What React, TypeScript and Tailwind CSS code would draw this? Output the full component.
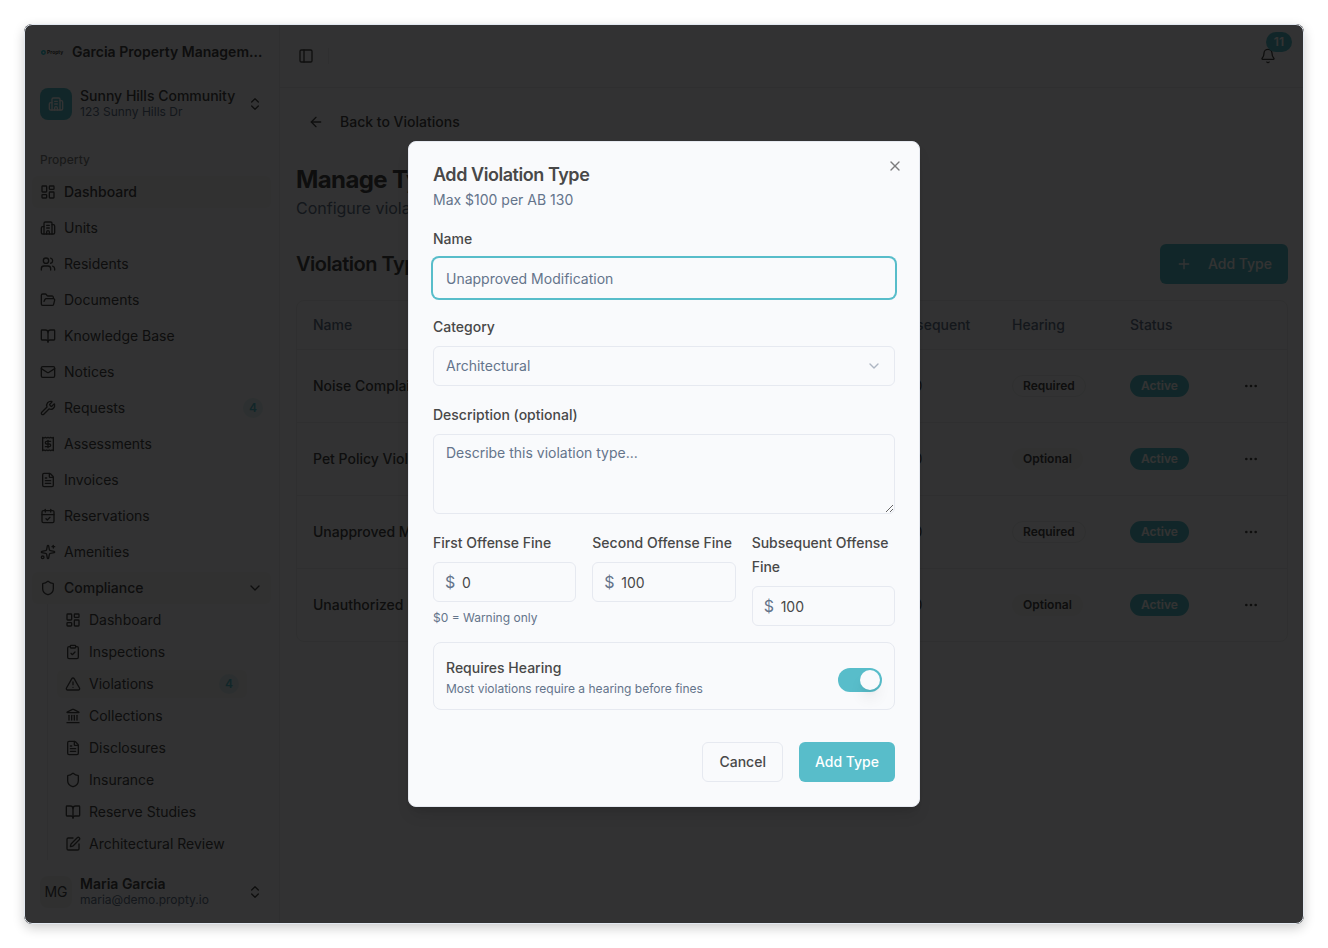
import {
  ArrowLeft,
  Bell,
  BookOpen,
  Building2,
  CalendarCheck,
  ChevronDown,
  ChevronsUpDown,
  ClipboardCheck,
  Ellipsis,
  FileText,
  FolderOpen,
  Landmark,
  LayoutDashboard,
  type LucideIcon,
  Mail,
  PanelLeft,
  Plus,
  Receipt,
  Shield,
  Sparkles,
  SquarePen,
  TriangleAlert,
  Users,
  Wrench,
  X,
} from "lucide-react";

type NavEntry = {
  label: string;
  icon: LucideIcon;
  badge?: number;
  active?: boolean;
};

const NAV: NavEntry[] = [
  { label: "Dashboard", icon: LayoutDashboard, active: true },
  { label: "Units", icon: Building2 },
  { label: "Residents", icon: Users },
  { label: "Documents", icon: FolderOpen },
  { label: "Knowledge Base", icon: BookOpen },
  { label: "Notices", icon: Mail },
  { label: "Requests", icon: Wrench, badge: 4 },
  { label: "Assessments", icon: Receipt },
  { label: "Invoices", icon: FileText },
  { label: "Reservations", icon: CalendarCheck },
  { label: "Amenities", icon: Sparkles },
];

const COMPLIANCE: NavEntry[] = [
  { label: "Dashboard", icon: LayoutDashboard },
  { label: "Inspections", icon: ClipboardCheck },
  { label: "Violations", icon: TriangleAlert, badge: 4, active: true },
  { label: "Collections", icon: Landmark },
  { label: "Disclosures", icon: FileText },
  { label: "Insurance", icon: Shield },
  { label: "Reserve Studies", icon: BookOpen },
  { label: "Architectural Review", icon: SquarePen },
];

const TYPES = [
  { name: "Noise Complaint", category: "Noise", hearing: true },
  { name: "Pet Policy Violation", category: "Pet", hearing: false },
  { name: "Unapproved Modification", category: "Architectural", hearing: true },
  { name: "Unauthorized Parking", category: "Parking", hearing: false },
];

function CountBadge({ count }: { count: number }) {
  return (
    <span className="ml-auto flex h-5 min-w-5 items-center justify-center rounded-full bg-[#58bdca]/15 px-1 font-semibold text-[#58bdca] text-xs">
      {count}
    </span>
  );
}

function Sidebar() {
  return (
    <aside className="flex w-64 shrink-0 flex-col border-[#e9ebef] border-r bg-[#f9fafc]">
      <div className="flex flex-col gap-2 p-2">
        <div className="flex h-10 items-center gap-2 px-2">
          <span className="flex w-6 shrink-0 items-center gap-px pl-px font-bold text-[5px] leading-none">
            <svg viewBox="0 0 10 10" className="size-[5px] shrink-0">
              <circle
                cx="5"
                cy="5"
                r="3.4"
                fill="none"
                stroke="#2fc4d4"
                strokeWidth="3"
              />
            </svg>
            Propty
          </span>
          <span className="truncate font-semibold text-sm">
            Garcia Property Management
          </span>
        </div>
        <button
          type="button"
          className="flex h-12 items-center gap-2 rounded-md p-2 text-left"
        >
          <span className="flex size-8 items-center justify-center rounded-lg bg-[#58bdca] text-white">
            <Building2 className="size-4" />
          </span>
          <span className="grid flex-1">
            <span className="truncate font-medium text-sm leading-4">
              Sunny Hills Community
            </span>
            <span className="truncate text-[#64748b] text-xs leading-4">
              123 Sunny Hills Dr
            </span>
          </span>
          <ChevronsUpDown className="size-4" />
        </button>
      </div>

      <nav className="min-h-0 flex-1 overflow-hidden px-2 pt-2">
        <p className="flex h-8 items-center px-2 font-medium text-[#484848]/70 text-xs">
          Property
        </p>
        <ul className="flex flex-col gap-1">
          {NAV.map(({ label, icon: Icon, badge, active }) => (
            <li key={label}>
              <a
                href="#"
                className={`flex h-8 items-center gap-2 rounded-md px-2 text-sm ${active ? "bg-[#f4f4f5] font-medium" : ""}`}
              >
                <Icon className="size-4" />
                {label}
                {badge && <CountBadge count={badge} />}
              </a>
            </li>
          ))}
          <li>
            <button
              type="button"
              className="flex h-8 w-full items-center gap-2 rounded-md bg-[#f4f4f5] px-2 font-medium text-sm"
            >
              <Shield className="size-4" />
              Compliance
              <ChevronDown className="ml-auto size-4" />
            </button>
            <ul className="mr-3.5 ml-[15px] flex flex-col gap-1 border-[#e9ebef] border-l py-0.5 pr-2.5 pl-[9px]">
              {COMPLIANCE.map(({ label, icon: Icon, badge, active }) => (
                <li key={label}>
                  <a
                    href="#"
                    className={`flex h-7 items-center gap-2 rounded-md px-2 text-sm ${active ? "bg-[#f4f4f5]" : ""}`}
                  >
                    <Icon className="size-4" />
                    {label}
                    {badge && <CountBadge count={badge} />}
                  </a>
                </li>
              ))}
            </ul>
          </li>
        </ul>
      </nav>

      <div className="p-2">
        <button
          type="button"
          className="flex h-12 w-full items-center gap-2 rounded-md p-2 text-left"
        >
          <span className="flex size-8 items-center justify-center rounded-lg bg-[#eeeff1] text-sm">
            MG
          </span>
          <span className="grid flex-1">
            <span className="truncate font-semibold text-sm leading-4">
              Maria Garcia
            </span>
            <span className="truncate text-[#64748b] text-xs leading-4">
              maria@demo.propty.io
            </span>
          </span>
          <ChevronsUpDown className="size-4" />
        </button>
      </div>
    </aside>
  );
}

function TopBar() {
  return (
    <header className="flex h-16 items-center border-[#e9ebef] border-b px-4">
      <button
        type="button"
        aria-label="Toggle sidebar"
        className="-ml-1 flex size-7 items-center justify-center"
      >
        <PanelLeft className="size-4" />
      </button>
      <span className="ml-2 h-4 w-px bg-[#e9ebef]" />
      <button
        type="button"
        aria-label="Notifications"
        className="relative ml-auto flex size-10 items-center justify-center"
      >
        <Bell className="size-4" />
        <span className="-top-1 -right-1 absolute flex h-5 min-w-5 items-center justify-center rounded-full bg-[#58bdca] px-2 font-semibold text-white text-xs">
          11
        </span>
      </button>
    </header>
  );
}

function TypesTable() {
  return (
    <div className="overflow-hidden rounded-lg border border-[#e9ebef]">
      <table className="w-full table-fixed text-left text-sm">
        <thead>
          <tr className="h-12 border-[#e9ebef] border-b text-[#64748b]">
            <th className="px-4 font-medium">Name</th>
            <th className="w-[150px] px-4 font-medium">Category</th>
            <th className="w-[112px] px-4 font-medium">First</th>
            <th className="w-[112px] px-4 font-medium">Second</th>
            <th className="w-[122px] px-4 font-medium">Subsequent</th>
            <th className="w-[118px] px-4 font-medium">Hearing</th>
            <th className="w-[101px] px-4 font-medium">Status</th>
            <th className="w-[72px] px-4" aria-label="Actions" />
          </tr>
        </thead>
        <tbody>
          {TYPES.map((type) => (
            <tr
              key={type.name}
              className="h-[73px] border-[#e9ebef] border-b last:border-b-0"
            >
              <td className="truncate px-4 font-medium">{type.name}</td>
              <td className="px-4">{type.category}</td>
              <td className="px-4">$0</td>
              <td className="px-4">$100</td>
              <td className="px-4">$100</td>
              <td className="px-4">
                <span
                  className={`inline-flex rounded-full border px-2.5 py-0.5 font-semibold text-xs ${type.hearing ? "border-[#e9ebef]" : "border-transparent bg-[#f4f4f5]"}`}
                >
                  {type.hearing ? "Required" : "Optional"}
                </span>
              </td>
              <td className="px-4">
                <span className="inline-flex rounded-full border border-transparent bg-[#58bdca] px-2.5 py-0.5 font-semibold text-white text-xs">
                  Active
                </span>
              </td>
              <td className="px-4">
                <button
                  type="button"
                  aria-label={`Actions for ${type.name}`}
                  className="flex size-10 items-center justify-center"
                >
                  <Ellipsis className="size-4" />
                </button>
              </td>
            </tr>
          ))}
        </tbody>
      </table>
    </div>
  );
}

function FineField({
  id,
  label,
  value,
  hint,
}: {
  id: string;
  label: string;
  value: string;
  hint?: string;
}) {
  return (
    <div>
      <label htmlFor={id} className="font-medium text-sm">
        {label}
      </label>
      <div className="relative mt-2">
        <span className="absolute inset-y-0 left-3 flex items-center text-[#64748b]">
          $
        </span>
        <input
          id={id}
          defaultValue={value}
          inputMode="numeric"
          className="block h-10 w-full rounded-md border border-[#e6e9f0] pr-3 pl-7 text-sm"
        />
      </div>
      {hint && <p className="mt-2 text-[#64748b] text-xs">{hint}</p>}
    </div>
  );
}

function AddTypeDialog() {
  return (
    <div
      role="dialog"
      aria-labelledby="dialog-title"
      className="relative w-full max-w-lg rounded-lg border border-[#e6e9f0] bg-[#f9fafc] p-6 shadow-lg"
    >
      <button
        type="button"
        aria-label="Close"
        className="absolute top-4 right-4 opacity-70"
      >
        <X className="size-4" />
      </button>
      <h2
        id="dialog-title"
        className="font-semibold text-lg leading-none tracking-tight"
      >
        Add Violation Type
      </h2>
      <p className="mt-1.5 text-[#64748b] text-sm">Max $100 per AB 130</p>

      <form className="mt-4 grid gap-4">
        <div>
          <label htmlFor="name" className="font-medium text-sm">
            Name
          </label>
          <input
            id="name"
            placeholder="Unapproved Modification"
            className="mt-2 block h-10 w-full rounded-md border border-transparent px-3 text-sm outline-none ring-2 ring-[#58bdca] placeholder:text-[#64748b]"
          />
        </div>
        <div>
          <label htmlFor="category" className="font-medium text-sm">
            Category
          </label>
          <div className="relative mt-2">
            <select
              id="category"
              className="block h-10 w-full appearance-none rounded-md border border-[#e6e9f0] px-3 text-[#64748b] text-sm"
            >
              <option>Architectural</option>
            </select>
            <ChevronDown className="pointer-events-none absolute top-3 right-[13px] size-4 text-[#64748b] opacity-50" />
          </div>
        </div>
        <div>
          <label htmlFor="description" className="font-medium text-sm">
            Description (optional)
          </label>
          <textarea
            id="description"
            placeholder="Describe this violation type..."
            className="mt-2 block h-20 w-full rounded-md border border-[#e6e9f0] px-3 py-2 text-sm placeholder:text-[#64748b]"
          />
        </div>
        <div className="grid grid-cols-3 gap-4">
          <FineField
            id="first"
            label="First Offense Fine"
            value="0"
            hint="$0 = Warning only"
          />
          <FineField id="second" label="Second Offense Fine" value="100" />
          <FineField
            id="subsequent"
            label="Subsequent Offense Fine"
            value="100"
          />
        </div>
        <div className="flex items-center justify-between rounded-lg border border-[#e6e9f0] p-3">
          <div>
            <label htmlFor="hearing" className="font-medium text-sm">
              Requires Hearing
            </label>
            <p className="mt-0.5 text-[#64748b] text-xs">
              Most violations require a hearing before fines
            </p>
          </div>
          <input
            id="hearing"
            type="checkbox"
            role="switch"
            defaultChecked
            className="mt-2 h-6 w-11 appearance-none rounded-full bg-[#e6e9f0] p-0.5 before:block before:size-5 before:rounded-full before:bg-[#f9fafc] before:shadow-lg checked:bg-[#58bdca] checked:before:ml-5"
          />
        </div>
        <div className="flex justify-end gap-4 pt-4">
          <button
            type="button"
            className="h-10 rounded-md border border-[#e6e9f0] px-4 font-medium text-sm"
          >
            Cancel
          </button>
          <button
            type="submit"
            className="h-10 rounded-md bg-[#58bdca] px-4 font-medium text-sm text-white"
          >
            Add Type
          </button>
        </div>
      </form>
    </div>
  );
}

export default function App() {
  return (
    <div className="flex h-screen bg-white p-6 font-['Inter',sans-serif] text-[#484848] antialiased">
      <div className="relative flex flex-1 overflow-hidden rounded-lg bg-[#f9fafc] shadow-[0_4px_12px_rgba(0,0,0,0.2)]">
        <Sidebar />
        <div className="min-w-0 flex-1">
          <TopBar />
          <main className="flex flex-col gap-6 p-4">
            <a
              href="#"
              className="flex h-9 items-center gap-4 self-start px-3 font-medium text-sm"
            >
              <ArrowLeft className="size-4" />
              Back to Violations
            </a>
            <div>
              <h1 className="font-bold text-2xl tracking-tight">
                Manage Types
              </h1>
              <p className="text-[#64748b]">
                Configure violation types and fines
              </p>
            </div>
            <section className="flex flex-col gap-4">
              <div className="flex items-center justify-between">
                <h2 className="font-semibold text-xl tracking-tight">
                  Violation Types
                </h2>
                <button
                  type="button"
                  className="flex h-10 items-center gap-4 rounded-md bg-[#58bdca] px-4 font-medium text-sm text-white"
                >
                  <Plus className="size-4" />
                  Add Type
                </button>
              </div>
              <TypesTable />
            </section>
          </main>
        </div>

        <div className="absolute inset-0 flex items-center justify-center bg-black/80">
          <AddTypeDialog />
        </div>
        <div className="pointer-events-none absolute inset-0 rounded-lg border border-[#e2e8f0]" />
      </div>
    </div>
  );
}
